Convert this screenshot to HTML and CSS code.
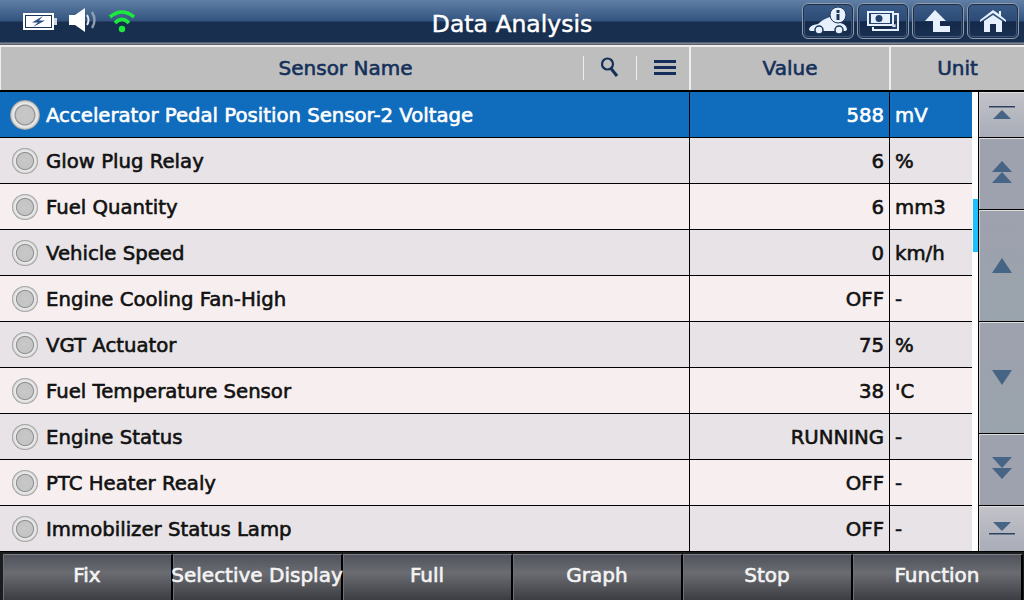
FILE: index.html
```html
<!DOCTYPE html>
<html>
<head>
    <meta charset="UTF-8">
    <title>Data Analysis</title>
    <link rel="stylesheet" href="styles.css">
</head>
<body>
<div class="screen">
    <div class="titlebar">
        <div class="status-icons">
            <svg width="36" height="20" viewBox="0 0 36 20">
                <rect x="1" y="1" width="29" height="15" fill="#fff" stroke="#fff" stroke-width="2"/>
                <rect x="2.5" y="2.5" width="26" height="12" fill="#fff" stroke="#1c3558" stroke-width="1"/>
                <rect x="31" y="5" width="3" height="7" fill="#cfd6de"/>
                <path d="M20 3 L9 9.5 H15 L10 14 L22 7.5 H16 Z" fill="#2b4d80"/>
            </svg>
            <svg class="speaker" width="28" height="24" viewBox="0 0 28 24">
                <path d="M0 7 H6 L16 0 V24 L6 17 H0 Z" fill="#fff"/>
                <path d="M18 7 Q21 12 18 17" fill="none" stroke="#e4e8ee" stroke-width="2"/>
                <path d="M23 4 Q28 12 23 20" fill="none" stroke="#8fa0b4" stroke-width="2.4"/>
            </svg>
            <svg class="wifi" width="28" height="24" viewBox="0 0 28 24">
                <path d="M2 8 Q14 -2 26 8" fill="none" stroke="#1bea3c" stroke-width="3.6"/>
                <path d="M7 14 Q14 7 21 14" fill="none" stroke="#1bea3c" stroke-width="3.6"/>
                <circle cx="14" cy="20" r="3.2" fill="#1bea3c"/>
            </svg>
        </div>
        <div class="title">Data Analysis</div>
        <div class="top-buttons">
            <div class="top-btn">
                <svg width="40" height="28" viewBox="0 0 40 28">
                    <path d="M1 22 Q2 18 10 17 Q15 12 22 10 L26 15 L32 16 Q38 17 39 22 Q39 24 36 24 H4 Q1 24 1 22 Z" fill="#e6f1fd"/>
                    <circle cx="11" cy="23" r="4" fill="#e6f1fd" stroke="#1c3558" stroke-width="1.5"/>
                    <circle cx="31" cy="23" r="4" fill="#e6f1fd" stroke="#1c3558" stroke-width="1.5"/>
                    <circle cx="30" cy="8" r="8" fill="#e6f1fd" stroke="#1c3558" stroke-width="1"/>
                    <rect x="28.5" y="3" width="3" height="3" fill="#1c3558"/>
                    <rect x="28.5" y="7" width="3" height="6" fill="#1c3558"/>
                </svg>
            </div>
            <div class="top-btn">
                <svg width="34" height="22" viewBox="0 0 34 22">
                    <path d="M28 3 H33 V21 H6 V17 H8 V19 H31 V5 H28 Z" fill="#e6f1fd"/>
                    <rect x="1" y="1" width="27" height="15" fill="#e6f1fd"/>
                    <rect x="3" y="3" width="23" height="11" fill="#23426c"/>
                    <rect x="5" y="4" width="19" height="9" fill="#e6f1fd"/>
                    <circle cx="13" cy="8.5" r="3.5" fill="#23426c"/>
                    <path d="M24 19 L31 12 V19 Z" fill="#23426c"/>
                    <path d="M26 17 L29.5 13.5 V17 Z" fill="#e6f1fd"/>
                </svg>
            </div>
            <div class="top-btn">
                <svg width="26" height="24" viewBox="0 0 26 24">
                    <path d="M10 1 L21 12 H15 V17 H25 V23 H8 V12 H0 Z" fill="#e6f1fd"/>
                </svg>
            </div>
            <div class="top-btn">
                <svg width="26" height="24" viewBox="0 0 26 24">
                    <path d="M13 1 L19 5 V2 H21 V7 L26 11 V13 L13 4 L0 13 V11 Z" fill="#e6f1fd"/>
                    <path d="M13 6 L22 12 V23 H16 V15 H10 V23 H4 V12 Z" fill="#e6f1fd"/>
                </svg>
            </div>
        </div>
    </div>

    <div class="table-head">
        <div class="head-name">
            <span class="head-label">Sensor Name</span>
            <span class="head-tools">
                <svg width="20" height="24" viewBox="0 0 20 24">
                    <circle cx="7.5" cy="8" r="5.5" fill="none" stroke="#14305a" stroke-width="2.2"/>
                    <path d="M11 12.5 L17 20" stroke="#14305a" stroke-width="3"/>
                </svg>
            </span>
            <span class="head-tools menu-tool">
                <svg width="22" height="18" viewBox="0 0 22 18">
                    <rect x="0" y="1" width="22" height="3" fill="#14305a"/>
                    <rect x="0" y="7" width="22" height="3" fill="#14305a"/>
                    <rect x="0" y="13" width="22" height="3" fill="#14305a"/>
                </svg>
            </span>
        </div>
        <div class="head-value">Value</div>
        <div class="head-unit">Unit</div>
    </div>

    <div class="main">
        <div class="rows">
            <div class="row selected"><span class="name"><i class="lamp"></i>Accelerator Pedal Position Sensor-2 Voltage</span><span class="value">588</span><span class="unit">mV</span></div>
            <div class="row"><span class="name"><i class="lamp"></i>Glow Plug Relay</span><span class="value">6</span><span class="unit">%</span></div>
            <div class="row"><span class="name"><i class="lamp"></i>Fuel Quantity</span><span class="value">6</span><span class="unit">mm3</span></div>
            <div class="row"><span class="name"><i class="lamp"></i>Vehicle Speed</span><span class="value">0</span><span class="unit">km/h</span></div>
            <div class="row"><span class="name"><i class="lamp"></i>Engine Cooling Fan-High</span><span class="value">OFF</span><span class="unit">-</span></div>
            <div class="row"><span class="name"><i class="lamp"></i>VGT Actuator</span><span class="value">75</span><span class="unit">%</span></div>
            <div class="row"><span class="name"><i class="lamp"></i>Fuel Temperature Sensor</span><span class="value">38</span><span class="unit">'C</span></div>
            <div class="row"><span class="name"><i class="lamp"></i>Engine Status</span><span class="value">RUNNING</span><span class="unit">-</span></div>
            <div class="row"><span class="name"><i class="lamp"></i>PTC Heater Realy</span><span class="value">OFF</span><span class="unit">-</span></div>
            <div class="row"><span class="name"><i class="lamp"></i>Immobilizer Status Lamp</span><span class="value">OFF</span><span class="unit">-</span></div>
        </div>
        <div class="track"><div class="thumb"></div></div>
        <div class="scroll-btns">
            <div class="sbtn sbtn-end">
                <svg width="26" height="20" viewBox="0 0 26 20"><rect y="1" width="26" height="1.5" fill="#2d4260"/><path d="M13 5 L22 14 H4 Z" fill="#466484"/></svg>
            </div>
            <div class="sbtn sbtn-double">
                <svg width="20" height="24" viewBox="0 0 20 24"><path d="M10 1 L20 12 H0 Z" fill="#466484"/><path d="M10 12 L20 23 H0 Z" fill="#466484"/></svg>
            </div>
            <div class="sbtn sbtn-big">
                <svg width="20" height="16" viewBox="0 0 20 16"><path d="M10 0 L20 15 H0 Z" fill="#466484"/></svg>
            </div>
            <div class="sbtn sbtn-big">
                <svg width="20" height="16" viewBox="0 0 20 16"><path d="M0 0 H20 L10 15 Z" fill="#466484"/></svg>
            </div>
            <div class="sbtn sbtn-double">
                <svg width="20" height="24" viewBox="0 0 20 24"><path d="M0 1 H20 L10 12 Z" fill="#466484"/><path d="M0 12 H20 L10 23 Z" fill="#466484"/></svg>
            </div>
            <div class="sbtn sbtn-end">
                <svg width="26" height="16" viewBox="0 0 26 16"><path d="M4 1 H22 L13 10 Z" fill="#466484"/><rect y="12" width="26" height="1.5" fill="#2d4260"/></svg>
            </div>
        </div>
    </div>

    <div class="footer">
        <div class="fbtn">Fix</div>
        <div class="fbtn">Selective Display</div>
        <div class="fbtn">Full</div>
        <div class="fbtn">Graph</div>
        <div class="fbtn">Stop</div>
        <div class="fbtn">Function</div>
    </div>
</div>
</body>
</html>
```

FILE: styles.css
```css
* {
  box-sizing: border-box;
}

html,
body {
  margin: 0;
  padding: 0;
  background: #000;
}

.screen {
  width: 1024px;
  height: 600px;
  overflow: hidden;
  display: flex;
  flex-direction: column;
  font-family: "DejaVu Sans", sans-serif;
  font-size: 19.7px;
  -webkit-text-stroke: 0.6px currentColor;
}

.titlebar {
  height: 45px;
  display: flex;
  padding: 0 4px 0 23px;
  background: linear-gradient(#5f7fa6 0, #33547f 21px, #172e4e 22px, #1a3050 42px, #8a94a2 43px, #555 45px);
}

.status-icons {
  width: 199px;
  flex: none;
  display: flex;
  align-items: flex-start;
  padding-top: 8px;
}

.status-icons svg:first-child {
  margin-top: 5px;
}

.status-icons .speaker {
  margin-left: 10px;
}

.status-icons .wifi {
  margin-left: 11px;
  margin-top: 1px;
}

.title {
  flex: 1;
  text-align: center;
  color: #fff;
  font-size: 23.5px;
  line-height: 49px;
  -webkit-text-stroke: 0.45px #fff;
}

.top-buttons {
  width: 218px;
  flex: none;
  display: flex;
  gap: 3px;
  padding-top: 3px;
}

.top-btn {
  width: 52px;
  height: 36px;
  display: flex;
  align-items: center;
  justify-content: center;
  border: 1px solid #8f9bab;
  border-radius: 6px;
  box-shadow: inset 0 0 0 1px #1c3050, inset 0 0 0 2px #3d5577;
  background: linear-gradient(#3b5c88, #2b4b76 50%, #14294a 52%, #1b3152);
}

.table-head {
  height: 47px;
  display: flex;
  background: #bebebe;
  color: #14305a;
  border-top: 2px solid #eee;
  border-bottom: 2px solid #000;
  font-size: 20px;
}

.head-name {
  width: 689px;
  display: flex;
  align-items: center;
  border-left: 1px solid #eee;
}

.head-label {
  width: 582px;
  text-align: center;
  padding-left: 107px;
  padding-bottom: 2px;
}

.head-tools {
  width: 53px;
  display: flex;
  align-items: center;
  justify-content: center;
  height: 24px;
  border-left: 1px solid #eee;
  margin-top: -2px;
}

.menu-tool {
  padding-left: 3px;
}

.head-value {
  width: 200px;
  border-left: 2px solid #eee;
  display: flex;
  align-items: center;
  justify-content: center;
  padding-bottom: 2px;
}

.head-unit {
  flex: 1;
  border-left: 2px solid #eee;
  display: flex;
  align-items: center;
  justify-content: center;
  padding-bottom: 2px;
}

.main {
  height: 459px;
  display: flex;
  background: #000;
}

.rows {
  width: 972px;
  background: #000;
}

.row {
  height: 46px;
  display: flex;
  color: #111;
  border-bottom: 1px solid #000;
}

.row:nth-child(even) {
  background: #e7e3e6;
}

.row:nth-child(odd) {
  background: #f7efef;
}

.row.selected {
  background: #106cbc;
  color: #fff;
}

.name {
  width: 690px;
  display: flex;
  align-items: center;
  padding: 2px 0 0 12px;
  border-right: 1px solid #000;
}

.lamp {
  width: 26px;
  height: 26px;
  margin: -2px 8px 0 0;
  border-radius: 50%;
  background: radial-gradient(circle closest-side, #c8c8c8 0, #c4c4c4 58%, #8e8e8e 66%, #ececec 74%, #dcdcdc 88%, #8f8f8f 100%);
}

.selected .name {
  padding-left: 10px;
}

.selected .lamp {
  width: 30px;
  height: 30px;
  margin-right: 6px;
}

.value {
  width: 200px;
  display: flex;
  align-items: center;
  justify-content: flex-end;
  padding: 2px 5px 0 0;
  border-right: 1px solid #000;
}

.unit {
  flex: 1;
  display: flex;
  align-items: center;
  padding: 2px 0 0 5px;
}

.track {
  width: 6px;
  background: #fff;
}

.thumb {
  width: 5px;
  height: 53px;
  margin: 107px 0 0 1px;
  background: #1cc0fc;
}

.scroll-btns {
  flex: 1;
  display: flex;
  flex-direction: column;
  gap: 1px;
  padding-left: 1px;
}

.sbtn {
  display: flex;
  align-items: center;
  justify-content: center;
  border-top: 1px solid #ddd;
  border-left: 1px solid #ccc;
}

.sbtn-end {
  height: 45px;
  background: linear-gradient(#c2c2c8, #a9adb8);
}

.sbtn-double {
  height: 71px;
  padding-bottom: 4px;
  background: #9ea1ae;
}

.sbtn-big {
  height: 111px;
  background: linear-gradient(#9ea1ae, #9aa4ac);
}

.footer {
  height: 49px;
  display: flex;
  padding: 2px 1px 0 3px;
  background: #1c1c1e;
  border-top: 1px solid #000;
}

.fbtn {
  width: 170px;
  display: flex;
  align-items: center;
  justify-content: center;
  padding: 0 1px 5px 0;
  white-space: nowrap;
  color: #f4f4f4;
  font-size: 20px;
  border-top: 1px solid #7a7e86;
  border-left: 1px solid #6c7078;
  border-right: 2px solid #000;
  background: linear-gradient(#50535b, #6a6c72 40%, #3c3d42);
}
```
